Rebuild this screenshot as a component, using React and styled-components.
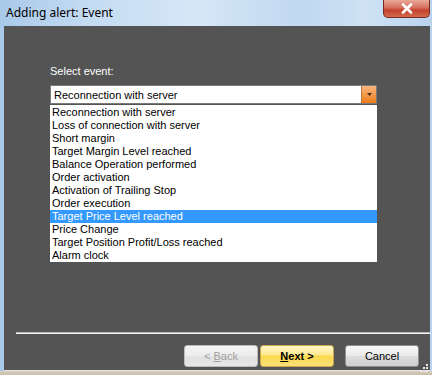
import React, { useState } from "react";
import styled, { createGlobalStyle } from "styled-components";

const EVENTS = [
  "Reconnection with server",
  "Loss of connection with server",
  "Short margin",
  "Target Margin Level reached",
  "Balance Operation performed",
  "Order activation",
  "Activation of Trailing Stop",
  "Order execution",
  "Target Price Level reached",
  "Price Change",
  "Target Position Profit/Loss reached",
  "Alarm clock",
];

function App() {
  const [selected, setSelected] = useState(8);

  return (
    <>
      <GlobalStyle />
      <Window>
        <TitleBar>
          <Title>Adding alert: Event</Title>
          <CloseButton>
            <svg width="12" height="11" viewBox="0 0 12 11">
              <path
                d="M2 1.5 L10 9.5 M10 1.5 L2 9.5"
                stroke="#fff"
                strokeWidth="2.6"
                strokeLinecap="round"
              />
            </svg>
          </CloseButton>
        </TitleBar>
        <Body>
          <Content>
            <Label>Select event:</Label>
            <Combo>
              <ComboText>Reconnection with server</ComboText>
              <ComboArrow>
                <svg width="5" height="3" viewBox="0 0 5 3">
                  <path d="M0 0 H5 L2.5 3 Z" fill="#4a2a10" />
                </svg>
              </ComboArrow>
            </Combo>
            <List>
              {EVENTS.map((el, index) => (
                <Item
                  key={index}
                  active={index === selected}
                  onClick={() => setSelected(index)}
                >
                  {el}
                </Item>
              ))}
            </List>
          </Content>
          <Separator />
          <ButtonRow>
            <Button disabled>
              &lt; <u>B</u>ack
            </Button>
            <Button primary>
              <u>N</u>ext &gt;
            </Button>
            <Button spaced>Cancel</Button>
          </ButtonRow>
          <Grip>
            <svg width="10" height="10" viewBox="0 0 10 10">
              {[
                [8, 2],
                [8, 5],
                [5, 5],
                [8, 8],
                [5, 8],
                [2, 8],
              ].map(([x, y], i) => (
                <rect key={i} x={x - 1} y={y - 1} width="2" height="2" fill="#e8e8e8" />
              ))}
            </svg>
          </Grip>
        </Body>
        <BottomFrame />
      </Window>
    </>
  );
}

export default App;

const GlobalStyle = createGlobalStyle`
  body {
    margin: 0;
    background: #ffffff;
  }
`;

const Window = styled.div`
  width: 432px;
  height: 375px;
  display: flex;
  flex-direction: column;
  background: linear-gradient(
    90deg,
    #a9c9ea 0%,
    #c3dbf2 20%,
    #d6e7f7 45%,
    #c0d8f0 70%,
    #cfe2f5 85%,
    #b9d3ee 100%
  );
  overflow: hidden;
`;

const TitleBar = styled.div`
  height: 26px;
  display: flex;
  align-items: flex-start;
  justify-content: space-between;
  padding-left: 6px;
  flex-shrink: 0;
`;

const Title = styled.span`
  margin-top: 4px;
  font-family: "Noto Sans", sans-serif;
  font-size: 12px;
  color: #000;
`;

const CloseButton = styled.div`
  width: 45px;
  height: 17px;
  margin-right: 2px;
  display: flex;
  align-items: center;
  justify-content: center;
  border: 1px solid #7a2a22;
  border-top: none;
  border-radius: 0 0 5px 5px;
  background: linear-gradient(180deg, #e9a99a 0%, #d8705e 45%, #c2412c 60%, #d46a4c 100%);
`;

const Body = styled.div`
  position: relative;
  flex: 1;
  margin: 0 2px 0 4px;
  background: #545454;
  display: flex;
  flex-direction: column;
  border-bottom: 1px solid #e6e6e6;
`;

const Content = styled.div`
  padding: 39px 0 0 46px;
  flex: 1;
`;

const Label = styled.div`
  font-family: "Liberation Sans", Arial, sans-serif;
  font-size: 11px;
  color: #ffffff;
  height: 13px;
  margin-bottom: 7px;
`;

const Combo = styled.div`
  width: 327px;
  height: 19px;
  box-sizing: border-box;
  background: #ffffff;
  border: 1px solid #7a7a7a;
  display: flex;
  align-items: center;
  justify-content: space-between;
`;

const ComboText = styled.span`
  padding-left: 3px;
  font-family: "Liberation Sans", Arial, sans-serif;
  font-size: 11px;
  color: #000;
`;

const ComboArrow = styled.div`
  width: 14px;
  height: 17px;
  display: flex;
  align-items: center;
  justify-content: center;
  background: linear-gradient(180deg, #f7b680 0%, #f39a4c 50%, #ee7d1a 100%);
  border-left: 1px solid #c0783a;
`;

const List = styled.div`
  width: 327px;
  height: 157px;
  box-sizing: border-box;
  margin-top: 1px;
  background: #ffffff;
  padding-top: 1px;
`;

const Item = styled.div`
  height: 13px;
  line-height: 13px;
  padding-left: 2px;
  font-family: "Liberation Sans", Arial, sans-serif;
  font-size: 11px;
  white-space: nowrap;
  color: ${({ active }) => (active ? "#ffffff" : "#000000")};
  background: ${({ active }) => (active ? "#3399ff" : "transparent")};
  cursor: default;
`;

const Separator = styled.div`
  margin-left: 12px;
  height: 2px;
  background: #f4f4f4;
  border-top: 1px solid #b8b8b8;
  box-sizing: border-box;
`;

const ButtonRow = styled.div`
  display: flex;
  justify-content: flex-end;
  padding: 11px 11px 3px 0;
  gap: 2px;
`;

const Button = styled.button`
  width: 74px;
  height: 22px;
  margin-left: ${({ spaced }) => (spaced ? "9px" : "0")};
  box-sizing: border-box;
  border-radius: 3px;
  font-family: "Liberation Sans", Arial, sans-serif;
  font-size: 11px;
  font-weight: ${({ primary }) => (primary ? "bold" : "normal")};
  color: ${({ disabled }) => (disabled ? "#a0a0a0" : "#000000")};
  border: 1px solid ${({ primary, disabled }) =>
    primary ? "#c9a64a" : disabled ? "#bcbcbc" : "#8e8e8e"};
  background: ${({ primary, disabled }) =>
    primary
      ? "linear-gradient(180deg, #fff6c8 0%, #fde98e 45%, #f9d84a 50%, #fbe17a 100%)"
      : disabled
      ? "linear-gradient(180deg, #f4f4f4 0%, #ececec 48%, #e2e2e2 52%, #e6e6e6 100%)"
      : "linear-gradient(180deg, #f6f6f6 0%, #ebebeb 48%, #dcdcdc 52%, #cfcfcf 100%)"};
  padding: 0;
`;

const Grip = styled.div`
  position: absolute;
  right: 1px;
  bottom: 1px;
  width: 10px;
  height: 10px;
`;

const BottomFrame = styled.div`
  height: 4px;
  flex-shrink: 0;
  background: linear-gradient(180deg, #d9cfc0 0%, #c8bba8 100%);
`;
